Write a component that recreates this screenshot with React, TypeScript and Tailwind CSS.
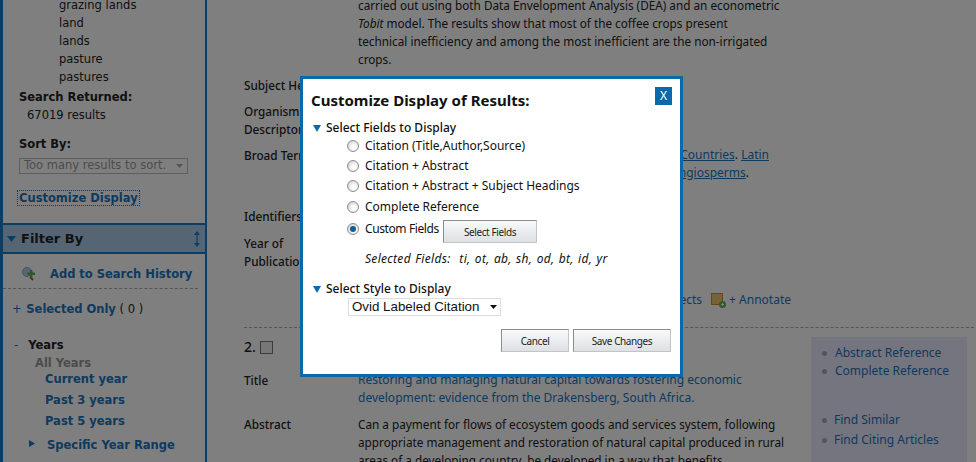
const mainFont = "font-['Noto_Sans',sans-serif]"
const sideFont = "font-['DejaVu_Sans',sans-serif]"
const linkColor = "text-[#1a74bc]"

const Row = ({ label, children, className = "" }: { label: React.ReactNode; children?: React.ReactNode; className?: string }) => (
  <div className={`flex ${className}`}>
    <div className="w-[114px] shrink-0 font-medium">{label}</div>
    <div className="w-[430px]">{children}</div>
  </div>
)

const Triangle = () => (
  <svg width="8" height="7" viewBox="0 0 8 7" className="shrink-0"><path d="M0 0h8L4 7z" fill="#0b69ad" /></svg>
)

const Radio = ({ checked = false }: { checked?: boolean }) => (
  <span className="w-3 h-3 shrink-0 rounded-full border border-[#8f8f8f] bg-[radial-gradient(circle_at_60%_60%,#ffffff_20%,#c4c4c4)] flex items-center justify-center">
    {checked && <span className="w-[6px] h-[6px] rounded-full bg-[#0b5f9e]" />}
  </span>
)

const RadioRow = ({ label, className = "" }: { label: string; className?: string }) => (
  <div className={`flex items-center gap-[6px] ${className}`}>
    <Radio />
    <span>{label}</span>
  </div>
)

const ModalButton = ({ label, className = "" }: { label: string; className?: string }) => (
  <button className={`h-[23px] border border-[#8c8c8c] border-r-[#c4c4c4] border-b-[#c4c4c4] bg-gradient-to-b from-[#f8fafa] to-[#dde1e3] text-[10px] tracking-[-0.4px] text-[#222] ${className}`}>{label}</button>
)

const Sidebar = () => (
  <aside className={`w-[207px] h-full shrink-0 border-l-[3px] border-r-2 border-[#147ccc] text-[11.5px] leading-[18px] text-[#222] ${sideFont}`}>
    <div className="pl-[56px] -mt-[4px]">
      <div>grazing lands</div>
      <div>land</div>
      <div>lands</div>
      <div>pasture</div>
      <div>pastures</div>
    </div>
    <div className="pl-4 mt-[2px] font-bold">Search Returned:</div>
    <div className="pl-6">67019 results</div>
    <div className="pl-4 mt-[11px] font-bold">Sort By:</div>
    <div className="ml-4 mt-[5px] w-[169px] h-[16px] border border-[#bdbdbd] flex items-center justify-between pl-1 pr-1 text-[#999] leading-none">
      <span>Too many results to sort.</span>
      <svg width="7" height="4" viewBox="0 0 7 4"><path d="M0 0h7L3.500 4z" fill="#aaa" /></svg>
    </div>
    <div className="ml-[15px] mt-[17px] w-fit px-[1px] outline outline-1 outline-dotted outline-[#1a74bc] text-[#1a74bc] font-bold leading-[14px]">Customize Display</div>
    <div className="mt-[18px] h-[31px] border-y-2 border-[#147ccc] bg-[#accae6] flex items-center justify-between pl-[4px] pr-[5px] text-[13px] font-bold text-[#222]">
      <span className="flex items-center gap-[5px]">
        <svg width="9" height="6" viewBox="0 0 9 6"><path d="M0 0h9L4.500 6z" fill="#147ccc" /></svg>
        Filter By
      </span>
      <svg width="6" height="16" viewBox="0 0 6 16"><path d="M3 0L6 4H3.600V12H6L3 16L0 12H2.400V4H0z" fill="#147ccc" /></svg>
    </div>
    <div className={`mt-[11px] flex items-center pl-[19px] font-bold ${linkColor}`}>
      <svg width="14" height="14" viewBox="0 0 14 14">
        <circle cx="5" cy="5" r="4.500" fill="#b7cde6" stroke="#8fa7c4" />
        <path d="M8 10l3 3" stroke="#a86a2a" strokeWidth="2" />
        <path d="M8 3h2.500v2.500H13V8h-2.500v2.500H8V8H5.500V5.500H8z" fill="#5bb04a" />
      </svg>
      <span className="ml-[14px]">Add to Search History</span>
    </div>
    <div className="mt-[5px] w-[195px] border-t border-dashed border-[#aaa]" />
    <div className="mt-[11px] pl-[9px] font-bold">
      <span className={`font-normal ${linkColor}`}>+ </span>
      <span className={`${linkColor} ml-[1px]`}>Selected Only</span>
      <span className="font-normal"> ( 0 )</span>
    </div>
    <div className="mt-[18px] pl-[11px] font-bold">
      <span className={`font-normal ${linkColor} mr-[10px]`}>-</span>Years
    </div>
    <div className="pl-[32px] font-bold text-[#999]">All Years</div>
    <div className={`pl-[42px] font-bold ${linkColor}`}>
      <div className="-mt-[2px]">Current year</div>
      <div className="mt-[3px]">Past 3 years</div>
      <div className="mt-[3px]">Past 5 years</div>
    </div>
    <div className={`mt-[6px] pl-[26px] flex items-center font-bold ${linkColor}`}>
      <svg width="6" height="7" viewBox="0 0 6 7" className="-mt-[4px]"><path d="M0 0l6 3.500L0 7z" fill="#147ccc" /></svg>
      <span className="ml-[12px]">Specific Year Range</span>
    </div>
  </aside>
)

const Results = () => (
  <main className={`relative flex-1 pl-[37px] text-[11.75px] leading-[18px] text-[#222] ${mainFont}`}>
    <div className="-mt-[4px] pl-[114px] w-[590px]">
      <div className="whitespace-nowrap">carried out using both Data Envelopment Analysis (DEA) and an econometric</div>
      <div className="whitespace-nowrap"><i>Tobit</i> model. The results show that most of the coffee crops present</div>
      <div className="whitespace-nowrap">technical inefficiency and among the most inefficient are the non-irrigated</div>
      <div>crops.</div>
    </div>
    <Row label="Subject Headings" className="mt-[8px]"><span className="invisible">coffee</span></Row>
    <Row label={<>Organism<br />Descriptors</>} className="mt-[8px]"><span className="invisible">Coffea</span></Row>
    <Row label="Broad Terms" className="mt-[8px] h-[36px]">
      <div className="w-[411px] text-[12px] text-right whitespace-nowrap">
        <div><a className={`underline ${linkColor}`}>Countries</a>. <a className={`underline ${linkColor}`}>Latin</a></div>
        <div className="pr-[20px]"><a className={`underline ${linkColor}`}>angiosperms</a>.</div>
      </div>
    </Row>
    <Row label="Identifiers" className="mt-[25px]" />
    <Row label={<>Year of<br />Publication</>} className="mt-[9px]" />
    <div className={`mt-[21px] w-[547px] text-[12px] flex justify-end items-center gap-[3px] ${linkColor}`}>
      <span>Objects</span>
      <svg width="15" height="15" viewBox="0 0 15 15" className="ml-[6px]">
        <rect x="0.500" y="0.500" width="11" height="11" fill="#f3c46a" stroke="#d68a2e" />
        <circle cx="11.500" cy="11.500" r="3.500" fill="#62b45a" />
        <path d="M10 11.500h3M11.500 10v3" stroke="#fff" />
      </svg>
      <span className="whitespace-nowrap">+ Annotate</span>
    </div>
    <div className="mt-[18px] w-[730px] border-t border-dashed border-[#aaa]" />
    <div className="mt-[10px] flex items-center gap-[4px] text-[14px] font-medium">
      <span>2.</span>
      <span className="w-[13px] h-[13px] border border-[#777] bg-[#eee]" />
    </div>
    <Row label="Title" className="mt-[15px]">
      <div className={`text-[12px] whitespace-nowrap ${linkColor}`}>Restoring and managing natural capital towards fostering economic<br />development: evidence from the Drakensberg, South Africa.</div>
    </Row>
    <Row label="Abstract" className="mt-[8px]">
      <div className="whitespace-nowrap">
        Can a payment for flows of ecosystem goods and services system, following<br />
        appropriate management and restoration of natural capital produced in rural<br />
        areas of a developing country, be developed in a way that benefits
      </div>
    </Row>
    <aside className={`absolute left-[604px] top-[337px] w-[156px] h-[125px] bg-[#eaeaff] pl-[11px] text-[12px] ${linkColor}`}>
      <ul className="pt-[7px]">
        <li className="flex items-center"><span className="w-[5px] h-[5px] rounded-full bg-[#aaa] mr-[8px]" />Abstract Reference</li>
        <li className="flex items-center"><span className="w-[5px] h-[5px] rounded-full bg-[#aaa] mr-[8px]" />Complete Reference</li>
      </ul>
      <ul className="mt-[31px]">
        <li className="flex items-center"><span className="w-[5px] h-[5px] rounded-full bg-[#aaa] mr-[7px]" />Find Similar</li>
        <li className="flex items-center mt-[2px]"><span className="w-[5px] h-[5px] rounded-full bg-[#aaa] mr-[7px]" />Find Citing Articles</li>
      </ul>
    </aside>
  </main>
)

const Modal = () => (
  <div className={`absolute left-[300px] top-[76px] w-[383px] h-[301px] border-[3px] border-[#0a68ab] bg-white text-[12px] leading-[18px] text-[#111] ${mainFont}`}>
    <div className="flex items-start justify-between pl-[8px] pr-[8px] pt-[8px]">
      <h2 className="text-[15px] leading-[26px] font-bold">Customize Display of Results:</h2>
      <button className="w-[17px] h-[18px] bg-[#0a68ab] text-white text-[12px] leading-[18px]">X</button>
    </div>
    <div className="pl-[10px] mt-[6px] flex items-center gap-[5px] font-medium">
      <Triangle />Select Fields to Display
    </div>
    <div className="pl-[44px]">
      <RadioRow label="Citation (Title,Author,Source)" />
      <RadioRow label="Citation + Abstract" className="mt-[2px]" />
      <RadioRow label="Citation + Abstract + Subject Headings" className="mt-[2px]" />
      <RadioRow label="Complete Reference" className="mt-[3px]" />
      <div className="flex items-start mt-[4px]">
        <span className="mt-[3px] mr-[6px]"><Radio checked /></span>
        <span className="w-[78px] whitespace-nowrap tracking-[-0.4px]">Custom Fields</span>
        <ModalButton label="Select Fields" className="w-[94px]" />
      </div>
      <div className="italic pl-[18px] mt-[7px] whitespace-pre tracking-[0.3px] [word-spacing:1px]">Selected Fields:  ti, ot, ab, sh, od, bt, id, yr</div>
    </div>
    <div className="pl-[10px] mt-[12px] flex items-center gap-[5px] font-medium">
      <Triangle />Select Style to Display
    </div>
    <div className="ml-[45px] w-[153px] h-[18px] border border-[#ddd] flex items-center justify-between pl-[3px] pr-[3px] font-['Liberation_Sans',sans-serif] text-[13.33px] text-[#111]">
      <span className="-mt-[1px]">Ovid Labeled Citation</span>
      <svg width="7" height="4" viewBox="0 0 7 4"><path d="M0 0h7L3.500 4z" fill="#111" /></svg>
    </div>
    <div className="flex justify-end gap-[4px] pr-[9px] mt-[13px]">
      <ModalButton label="Cancel" className="w-[68px]" />
      <ModalButton label="Save Changes" className="w-[98px]" />
    </div>
  </div>
)

export default function App() {
  return (
    <div className="relative w-[976px] h-[462px] overflow-hidden bg-white">
      <div className="flex h-full">
        <Sidebar />
        <Results />
      </div>
      <div className="absolute inset-0 bg-black/50" />
      <Modal />
    </div>
  )
}
